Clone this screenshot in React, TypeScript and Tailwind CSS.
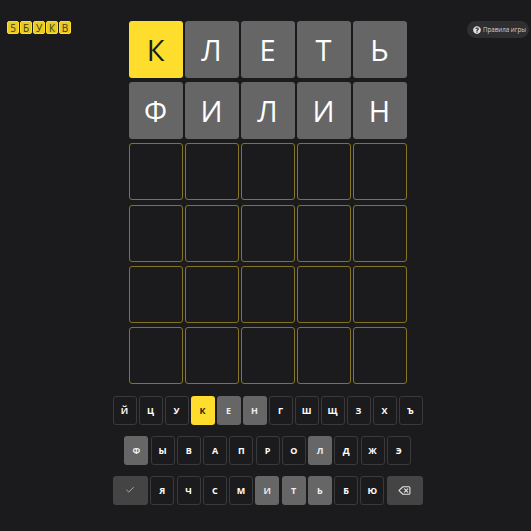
import { Check, Delete } from 'lucide-react';
import { FaQuestionCircle } from 'react-icons/fa';

type CellState = 'hit' | 'miss' | 'empty';

const guesses: [string, CellState][][] = [
  [['К', 'hit'], ['Л', 'miss'], ['Е', 'miss'], ['Т', 'miss'], ['Ь', 'miss']],
  [['Ф', 'miss'], ['И', 'miss'], ['Л', 'miss'], ['И', 'miss'], ['Н', 'miss']],
];

const emptyRow: [string, CellState][] = [['', 'empty'], ['', 'empty'], ['', 'empty'], ['', 'empty'], ['', 'empty']];
const rows = [...guesses, emptyRow, emptyRow, emptyRow, emptyRow];

const keyRows = [
  ['Й', 'Ц', 'У', 'К', 'Е', 'Н', 'Г', 'Ш', 'Щ', 'З', 'Х', 'Ъ'],
  ['Ф', 'Ы', 'В', 'А', 'П', 'Р', 'О', 'Л', 'Д', 'Ж', 'Э'],
  ['ok', 'Я', 'Ч', 'С', 'М', 'И', 'Т', 'Ь', 'Б', 'Ю', 'del'],
];

const missKeys = ['Е', 'Н', 'Ф', 'Л', 'И', 'Т', 'Ь'];

function Cell({ letter, state }: { letter: string; state: CellState }) {
  const color =
    state === 'hit'
      ? 'bg-[#ffdd2d] text-[#1b1b1d]'
      : state === 'miss'
        ? 'bg-[#666666] text-white'
        : 'border border-[#857522]';
  return (
    <div className={`flex h-[57px] w-[54px] items-center justify-center rounded-[3px] text-[29px] ${color}`}>
      {letter}
    </div>
  );
}

function Key({ label }: { label: string }) {
  if (label === 'ok') {
    return (
      <div className="flex h-[29px] w-[35.5px] items-center justify-center rounded-[3px] bg-[#444444] text-[#e5e5e5]">
        <Check size={10} strokeWidth={1.5} />
      </div>
    );
  }
  if (label === 'del') {
    return (
      <div className="flex h-[29px] w-[36px] items-center justify-center rounded-[3px] bg-[#444444] text-[#e5e5e5]">
        <Delete size={13} strokeWidth={2} />
      </div>
    );
  }
  const color =
    label === 'К'
      ? 'bg-[#ffdd2d] text-[#1b1b1d]'
      : missKeys.includes(label)
        ? 'bg-[#666666] text-[#eeeeee]'
        : 'border border-[#3a3a3c] text-white';
  return (
    <div className={`flex h-[29px] w-[24px] items-center justify-center rounded-[3px] text-[9px] font-bold ${color}`}>
      {label}
    </div>
  );
}

export default function App() {
  return (
    <div className="relative flex h-[531px] w-[531px] flex-col items-center overflow-hidden bg-[#1b1b1d] pl-[4px] pt-[21px] font-['Open_Sans','Noto_Sans',sans-serif]">
      {/* logo */}
      <div className="absolute left-[7px] top-[21px] flex gap-px">
        {['5', 'Б', 'У', 'К', 'В'].map((ch) => (
          <span
            key={ch}
            className="flex h-[13px] w-[12px] items-center justify-center rounded-[2px] border border-[#ffdd2d] bg-[#e8ca20] text-[10px] leading-none text-[#3a3a24]"
          >
            {ch}
          </span>
        ))}
      </div>

      {/* rules button */}
      <div className="absolute left-[467px] top-[21px] flex h-[17px] w-[62px] items-center gap-[2px] rounded-full bg-[#2f2f31] pl-[6px] text-[6.2px] text-[#d0d0d0]">
        <FaQuestionCircle size={8} className="shrink-0 text-[#e0e0e0]" />
        <span className="whitespace-nowrap">Правила игры</span>
      </div>

      {/* board */}
      <div className="flex flex-col gap-[4.2px]">
        {rows.map((row, i) => (
          <div key={i} className="flex gap-[2px]">
            {row.map(([letter, state], j) => (
              <Cell key={j} letter={letter} state={state} />
            ))}
          </div>
        ))}
      </div>

      {/* keyboard */}
      <div className="mt-[12px] flex flex-col gap-[11px]">
        {keyRows.map((row, i) => (
          <div key={i} className={`flex justify-center ${i === 0 ? 'gap-[2px]' : 'gap-[2.25px]'}`}>
            {row.map((label) => (
              <Key key={label} label={label} />
            ))}
          </div>
        ))}
      </div>
    </div>
  );
}
